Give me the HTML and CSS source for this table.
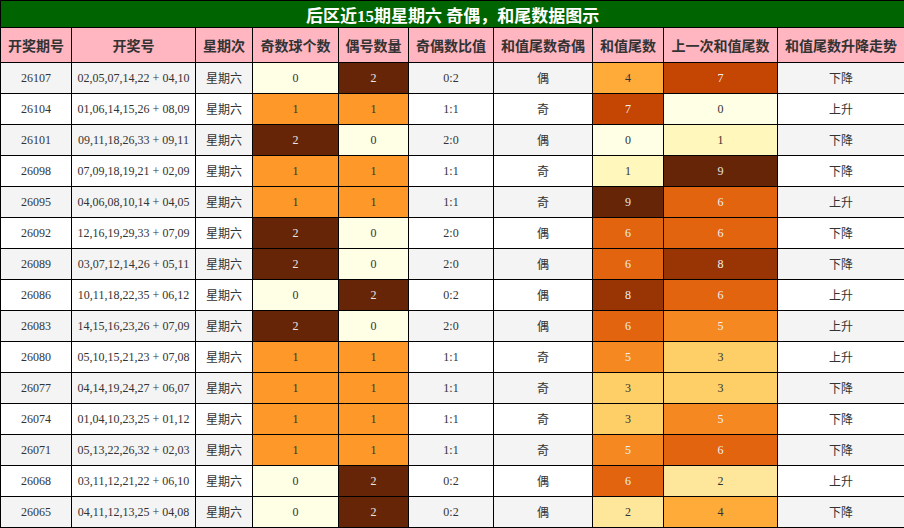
FILE: index.html
```html
<!DOCTYPE html>
<html lang="zh">
<head>
<meta charset="utf-8">
<link rel="stylesheet" href="styles.css">
</head>
<body>
<table class="chart">
<colgroup>
<col class="c1"><col class="c2"><col class="c3"><col class="c4"><col class="c5"><col class="c6"><col class="c7"><col class="c8"><col class="c9"><col class="c10">
</colgroup>
<thead>
<tr class="title-row"><th colspan="10" class="title">后区近15期星期六 奇偶，和尾数据图示</th></tr>
<tr class="head-row">
<th>开奖期号</th><th>开奖号</th><th>星期次</th><th>奇数球个数</th><th>偶号数量</th><th>奇偶数比值</th><th>和值尾数奇偶</th><th>和值尾数</th><th>上一次和值尾数</th><th>和值尾数升降走势</th>
</tr>
</thead>
<tbody>
<tr><td class="num">26107</td><td class="num">02,05,07,14,22 + 04,10</td><td class="cn">星期六</td><td class="num o0">0</td><td class="num o2">2</td><td class="num">0:2</td><td class="cn">偶</td><td class="num h4">4</td><td class="num h7">7</td><td class="cn">下降</td></tr>
<tr><td class="num">26104</td><td class="num">01,06,14,15,26 + 08,09</td><td class="cn">星期六</td><td class="num o1">1</td><td class="num o1">1</td><td class="num">1:1</td><td class="cn">奇</td><td class="num h7">7</td><td class="num h0">0</td><td class="cn">上升</td></tr>
<tr><td class="num">26101</td><td class="num">09,11,18,26,33 + 09,11</td><td class="cn">星期六</td><td class="num o2">2</td><td class="num o0">0</td><td class="num">2:0</td><td class="cn">偶</td><td class="num h0">0</td><td class="num h1">1</td><td class="cn">下降</td></tr>
<tr><td class="num">26098</td><td class="num">07,09,18,19,21 + 02,09</td><td class="cn">星期六</td><td class="num o1">1</td><td class="num o1">1</td><td class="num">1:1</td><td class="cn">奇</td><td class="num h1">1</td><td class="num h9">9</td><td class="cn">下降</td></tr>
<tr><td class="num">26095</td><td class="num">04,06,08,10,14 + 04,05</td><td class="cn">星期六</td><td class="num o1">1</td><td class="num o1">1</td><td class="num">1:1</td><td class="cn">奇</td><td class="num h9">9</td><td class="num h6">6</td><td class="cn">上升</td></tr>
<tr><td class="num">26092</td><td class="num">12,16,19,29,33 + 07,09</td><td class="cn">星期六</td><td class="num o2">2</td><td class="num o0">0</td><td class="num">2:0</td><td class="cn">偶</td><td class="num h6">6</td><td class="num h6">6</td><td class="cn">下降</td></tr>
<tr><td class="num">26089</td><td class="num">03,07,12,14,26 + 05,11</td><td class="cn">星期六</td><td class="num o2">2</td><td class="num o0">0</td><td class="num">2:0</td><td class="cn">偶</td><td class="num h6">6</td><td class="num h8">8</td><td class="cn">下降</td></tr>
<tr><td class="num">26086</td><td class="num">10,11,18,22,35 + 06,12</td><td class="cn">星期六</td><td class="num o0">0</td><td class="num o2">2</td><td class="num">0:2</td><td class="cn">偶</td><td class="num h8">8</td><td class="num h6">6</td><td class="cn">上升</td></tr>
<tr><td class="num">26083</td><td class="num">14,15,16,23,26 + 07,09</td><td class="cn">星期六</td><td class="num o2">2</td><td class="num o0">0</td><td class="num">2:0</td><td class="cn">偶</td><td class="num h6">6</td><td class="num h5">5</td><td class="cn">上升</td></tr>
<tr><td class="num">26080</td><td class="num">05,10,15,21,23 + 07,08</td><td class="cn">星期六</td><td class="num o1">1</td><td class="num o1">1</td><td class="num">1:1</td><td class="cn">奇</td><td class="num h5">5</td><td class="num h3">3</td><td class="cn">上升</td></tr>
<tr><td class="num">26077</td><td class="num">04,14,19,24,27 + 06,07</td><td class="cn">星期六</td><td class="num o1">1</td><td class="num o1">1</td><td class="num">1:1</td><td class="cn">奇</td><td class="num h3">3</td><td class="num h3">3</td><td class="cn">下降</td></tr>
<tr><td class="num">26074</td><td class="num">01,04,10,23,25 + 01,12</td><td class="cn">星期六</td><td class="num o1">1</td><td class="num o1">1</td><td class="num">1:1</td><td class="cn">奇</td><td class="num h3">3</td><td class="num h5">5</td><td class="cn">下降</td></tr>
<tr><td class="num">26071</td><td class="num">05,13,22,26,32 + 02,03</td><td class="cn">星期六</td><td class="num o1">1</td><td class="num o1">1</td><td class="num">1:1</td><td class="cn">奇</td><td class="num h5">5</td><td class="num h6">6</td><td class="cn">下降</td></tr>
<tr><td class="num">26068</td><td class="num">03,11,12,21,22 + 06,10</td><td class="cn">星期六</td><td class="num o0">0</td><td class="num o2">2</td><td class="num">0:2</td><td class="cn">偶</td><td class="num h6">6</td><td class="num h2">2</td><td class="cn">上升</td></tr>
<tr><td class="num">26065</td><td class="num">04,11,12,13,25 + 04,08</td><td class="cn">星期六</td><td class="num o0">0</td><td class="num o2">2</td><td class="num">0:2</td><td class="cn">偶</td><td class="num h2">2</td><td class="num h4">4</td><td class="cn">下降</td></tr>
</tbody>
</table>
</body>
</html>
```

FILE: styles.css
```css
html, body {
  margin: 0;
  padding: 0;
  background: #ffffff;
}

.chart {
  border-collapse: collapse;
  table-layout: fixed;
  width: 904px;
  font-family: "Liberation Serif", "Noto Sans CJK SC", serif;
  color: #333333;
}

.c1 { width: 71px; }
.c2 { width: 124px; }
.c3 { width: 57px; }
.c4 { width: 86px; }
.c5 { width: 70px; }
.c6 { width: 85px; }
.c7 { width: 99px; }
.c8 { width: 71px; }
.c9 { width: 114px; }
.c10 { width: 127px; }

.chart th,
.chart td {
  border: 1px solid #000000;
  padding: 0;
  text-align: center;
  vertical-align: middle;
  overflow: hidden;
  white-space: nowrap;
}

.title-row { height: 27px; }

.title {
  background: #006400;
  color: #ffffff;
  font-size: 17px;
  font-weight: bold;
  font-family: "Liberation Serif", "Noto Sans CJK SC", serif;
}

.head-row { height: 35px; }

.head-row th {
  background: #ffb6c1;
  color: #333333;
  font-size: 14px;
  font-weight: bold;
  font-family: "Noto Sans CJK SC", sans-serif;
}

.chart tbody tr { height: 31px; }
.chart tbody tr:nth-child(odd) { background: #f4f4f4; }
.chart tbody tr:nth-child(even) { background: #ffffff; }

.num { font-size: 12px; }
.cn {
  font-size: 12px;
  line-height: 14px;
  font-family: "Noto Sans CJK SC", sans-serif;
}

.o0 { background: #ffffe5; }
.o1 { background: #fe9929; }
.o2 { background: #662506; color: #e6e6e6; }

.h0 { background: #ffffe5; }
.h1 { background: #fff7bc; }
.h2 { background: #fee79a; }
.h3 { background: #fecf66; }
.h4 { background: #feab3a; }
.h5 { background: #f68822; color: #f0f0f0; }
.h6 { background: #e2640f; color: #f0f0f0; }
.h7 { background: #c44602; color: #f0f0f0; }
.h8 { background: #993404; color: #f0f0f0; }
.h9 { background: #662506; color: #e6e6e6; }
```
